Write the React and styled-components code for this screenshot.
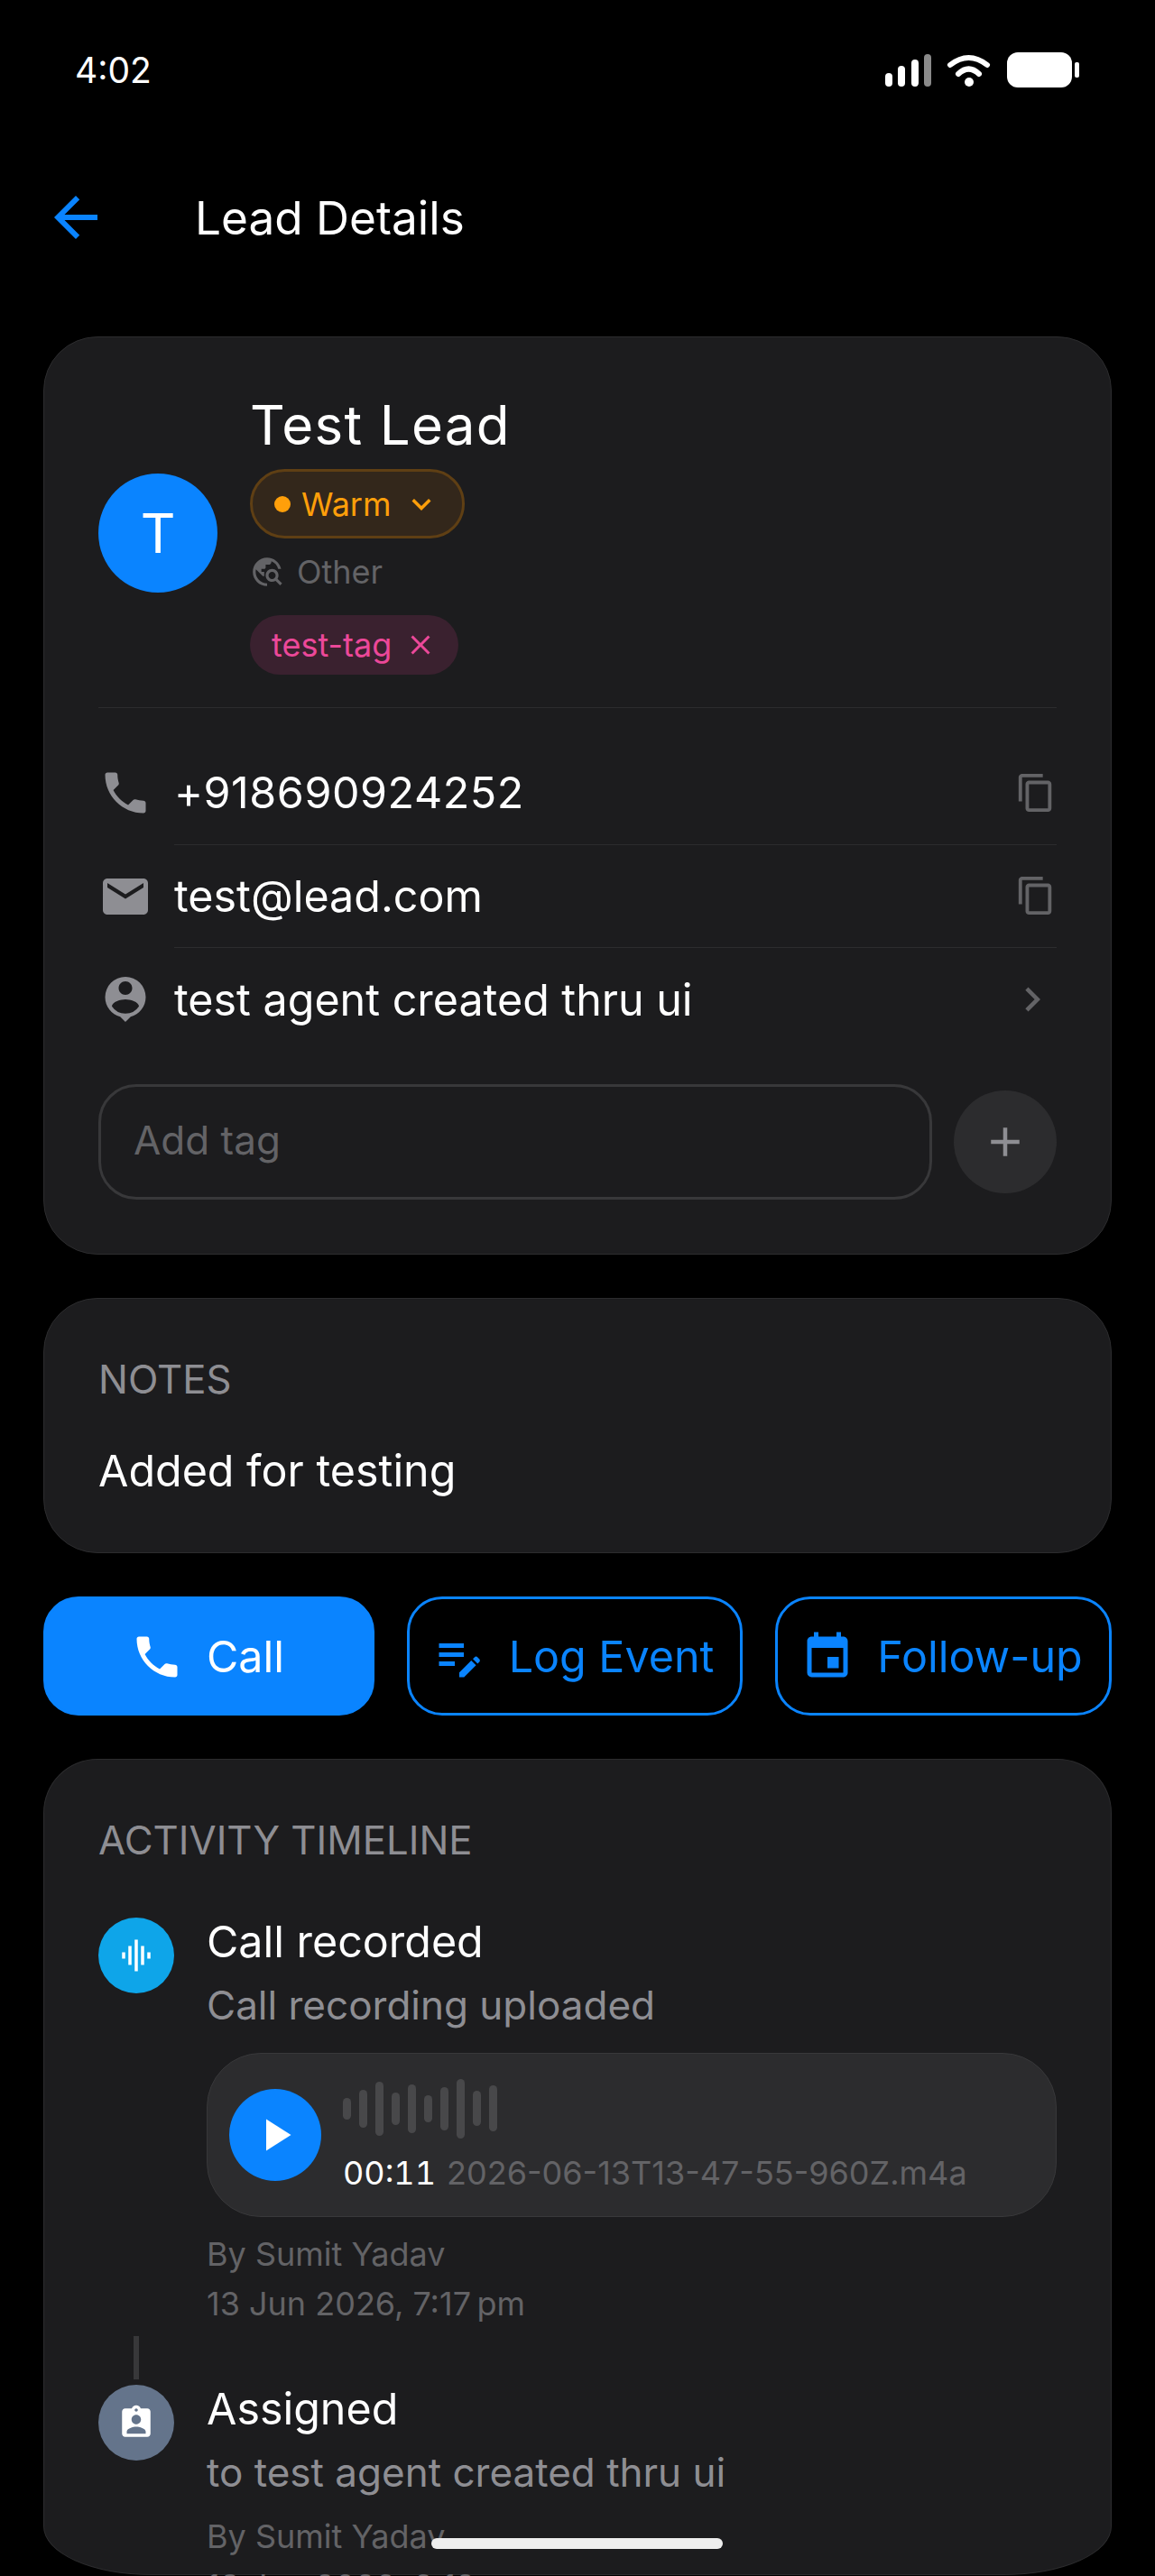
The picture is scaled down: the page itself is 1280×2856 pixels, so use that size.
import React from "react";
import styled, { createGlobalStyle } from "styled-components";
import {
  MdArrowBack, MdPhone, MdEmail, MdContentCopy, MdPersonPin, MdChevronRight, MdAdd,
  MdEditNote, MdEvent, MdGraphicEq, MdPlayArrow, MdAssignmentInd, MdTravelExplore,
  MdClose, MdKeyboardArrowDown,
} from "react-icons/md";

const Global = createGlobalStyle`
  html, body { margin: 0; padding: 0; background: #000; }
  body { font-family: Inter, "Liberation Sans", sans-serif; color: #fff; }
`;

const Screen = styled.div`
  position: relative;
  width: 1280px;
  height: 2856px;
  overflow: hidden;
  background: #000;
`;
const StatusBar = styled.div`
  height: 154px;
  display: flex;
  align-items: center;
  justify-content: space-between;
  padding: 0 84px 0 83px;
  box-sizing: border-box;
  font-size: 39px;
  font-weight: 400;
`;
const StatusGlyphs = styled.svg`
  margin: 6px -1px 0 0;
`;
const Header = styled.header`
  height: 174px;
  display: flex;
  align-items: center;
  padding-left: 48px;
  padding-bottom: 1px;
  box-sizing: border-box;
  color: #0a84ff;
  font-size: 72px;
`;
const BackIcon = styled.span`
  display: flex;
  width: 72px;
  height: 72px;
  margin-right: 96px;
`;
const PageTitle = styled.h1`
  margin: 0;
  font-size: 51.3px;
  font-weight: 400;
  color: #fff;
`;
const Content = styled.main`
  display: flex;
  flex-direction: column;
  gap: 48px;
  padding: 45px 48px 0;
`;
const Card = styled.section`
  background: #1c1c1e;
  border: 1px solid #2c2c2e;
  border-radius: 60px;
  padding: 60px;
`;
const Lead = styled.div`
  display: flex;
  align-items: center;
  gap: 36px;
  padding-bottom: 36px;
  border-bottom: 1px solid #2c2c2e;
`;
const Avatar = styled.div`
  width: 132px;
  height: 132px;
  border-radius: 50%;
  background: #0a84ff;
  display: flex;
  align-items: center;
  justify-content: center;
  font-size: 60px;
  font-weight: 400;
  flex: none;
`;
const LeadInfo = styled.div`
  display: flex;
  flex-direction: column;
  align-items: flex-start;
`;
const LeadName = styled.h2`
  margin: 0;
  font-size: 60px;
  line-height: 74px;
  font-weight: 400;
  letter-spacing: 1.3px;
`;
const StatusPill = styled.div`
  margin-top: 12px;
  height: 77px;
  box-sizing: border-box;
  border: 3px solid #5f3f14;
  background: #33271b;
  border-radius: 39px;
  display: flex;
  align-items: center;
  padding: 0 24px;
  color: #ff9f0a;
  font-size: 36px;
`;
const Dot = styled.span`
  width: 18px;
  height: 18px;
  border-radius: 50%;
  background: #ff9f0a;
  margin-right: 12px;
`;
const Source = styled.div`
  margin-top: 19px;
  height: 36px;
  line-height: 36px;
  display: flex;
  align-items: center;
  gap: 14px;
  color: #636366;
  font-size: 36px;
`;
const Tag = styled.div`
  margin-top: 30px;
  height: 66px;
  border-radius: 33px;
  background: #3a212f;
  color: #ec4899;
  font-size: 36px;
  display: flex;
  align-items: center;
  padding: 0 24px;
  gap: 14px;
`;
const Rows = styled.div`
  margin-top: 37px;
`;
const Row = styled.div`
  height: 114.5px;
  display: flex;
  align-items: center;
  gap: 24px;
  color: #8e8e93;
`;
const RowBody = styled.div`
  flex: 1;
  height: 100%;
  display: flex;
  align-items: center;
  justify-content: space-between;
  box-sizing: border-box;
  border-bottom: ${(p) => (p.$divider ? "1px solid #2c2c2e" : "none")};
`;
const RowText = styled.span`
  font-size: 48.4px;
  color: #fff;
  letter-spacing: ${(p) => p.$tracking || "0"};
`;
const Trailing = styled.span`
  display: flex;
  color: #636366;
`;
const AddTag = styled.div`
  margin-top: 36px;
  display: flex;
  align-items: center;
  gap: 24px;
`;
const TagInput = styled.div`
  flex: 1;
  height: 128px;
  box-sizing: border-box;
  border: 3px solid #38383a;
  border-radius: 42px;
  display: flex;
  align-items: center;
  padding-left: 36px;
  padding-bottom: 4px;
  color: #636366;
  font-size: 44px;
`;
const RoundAdd = styled.div`
  width: 114px;
  height: 114px;
  border-radius: 50%;
  background: #2c2c2e;
  color: #8e8e93;
  display: flex;
  align-items: center;
  justify-content: center;
`;
const SectionLabel = styled.div`
  font-size: 43.7px;
  line-height: 60px;
  color: #8e8e93;
`;
const NoteText = styled.p`
  margin: 41px 0 0;
  font-size: 48.4px;
  line-height: 60px;
  color: #fff;
`;
const Actions = styled.div`
  display: grid;
  grid-template-columns: 367fr 372fr 373fr;
  gap: 36px;
`;
const ActionButton = styled.button`
  height: 132px;
  box-sizing: border-box;
  border-radius: 39px;
  border: 3px solid #0a84ff;
  background: ${(p) => (p.$primary ? "#0a84ff" : "transparent")};
  color: ${(p) => (p.$primary ? "#fff" : "#0a84ff")};
  font: 400 48.4px Inter, sans-serif;
  display: flex;
  align-items: center;
  justify-content: center;
  gap: 25px;
  padding: 2px 4px 0 0;
`;
const TimelineCard = styled(Card)`
  box-sizing: border-box;
  height: 905px;
  padding-bottom: 0;
  border-radius: 60px 60px 120px 120px / 60px 60px 54px 54px;
`;
const Event = styled.div`
  display: flex;
  gap: 36px;
  margin-top: ${(p) => p.$top || "0"};
`;
const EventIcon = styled.div`
  width: 84px;
  height: 84px;
  border-radius: 50%;
  background: ${(p) => p.$color};
  display: flex;
  align-items: center;
  justify-content: center;
  flex: none;
`;
const EventBody = styled.div`
  flex: 1;
  min-width: 0;
`;
const EventTitle = styled.div`
  font-size: 48.4px;
  line-height: 60px;
  color: #fff;
  margin-top: -3px;
`;
const EventSub = styled.div`
  font-size: 44px;
  line-height: 60px;
  margin-top: 10px;
  color: #8e8e93;
`;
const Meta = styled.div`
  font-size: 36px;
  line-height: 55px;
  color: #636366;
`;
const MetaGroup = styled.div`
  margin-top: 14px;
`;
const Connector = styled.div`
  width: 6px;
  height: 48px;
  margin: 8px 0 6px 39px;
  background: #38383a;
`;
const Player = styled.div`
  margin-top: 23px;
  height: 182px;
  box-sizing: border-box;
  border: 1px solid #38383a;
  border-radius: 60px;
  background: #2c2c2e;
  display: flex;
  align-items: center;
  padding-left: 24px;
  gap: 24px;
`;
const PlayButton = styled.div`
  width: 102px;
  height: 102px;
  border-radius: 50%;
  background: #0a84ff;
  display: flex;
  align-items: center;
  justify-content: center;
  flex: none;
`;
const PlayerBody = styled.div`
  display: flex;
  flex-direction: column;
  gap: 16px;
  margin-top: 2px;
`;
const Wave = styled.div`
  display: flex;
  align-items: center;
  gap: 9px;
  height: 66px;
`;
const WaveBar = styled.span`
  width: 9px;
  border-radius: 5px;
  background: #48484a;
`;
const PlayerText = styled.div`
  font-size: 36px;
  line-height: 44px;
  color: #636366;
  white-space: nowrap;
`;
const Duration = styled.span`
  color: #fff;
  margin-right: 12px;
  font-variant-numeric: tabular-nums;
`;
const HomeIndicator = styled.div`
  position: absolute;
  left: 478px;
  top: 2814px;
  width: 323px;
  height: 12px;
  border-radius: 6px;
  background: #eee;
`;

const waveHeights = [24, 42, 60, 36, 54, 30, 48, 66, 39, 51];

function StatusIcons() {
  return (
    <StatusGlyphs width="216" height="44" viewBox="0 -2 216 44">
      <g fill="#fff">
        <rect x="0" y="21" width="8" height="15" rx="4" />
        <rect x="14" y="13" width="8" height="23" rx="4" />
        <rect x="29" y="6" width="8" height="30" rx="4" />
      </g>
      <rect x="43" y="0" width="8" height="36" rx="4" fill="#8a8a8a" />
      <g fill="none" stroke="#fff" strokeLinecap="round" strokeWidth="6">
        <path d="M72 12 Q92.5 -4 113 12" />
        <path d="M81 22 Q92.5 11 104 22" />
      </g>
      <circle cx="93" cy="31" r="5" fill="#fff" />
      <rect x="135" y="-2" width="72" height="39" rx="12" fill="#fff" />
      <rect x="210" y="9" width="5" height="17" rx="2" fill="#fff" />
    </StatusGlyphs>
  );
}

export default function App() {
  return (
    <Screen>
      <Global />
      <StatusBar>
        <span>4:02</span>
        <StatusIcons />
      </StatusBar>
      <Header>
        <BackIcon><MdArrowBack size={72} /></BackIcon>
        <PageTitle>Lead Details</PageTitle>
      </Header>
      <Content>
        <Card>
          <Lead>
            <Avatar>T</Avatar>
            <LeadInfo>
              <LeadName>Test Lead</LeadName>
              <StatusPill>
                <Dot />
                Warm
                <MdKeyboardArrowDown size={42} style={{ marginLeft: 12 }} />
              </StatusPill>
              <Source>
                <MdTravelExplore size={38} />
                Other
              </Source>
              <Tag>
                test-tag
                <MdClose size={36} />
              </Tag>
            </LeadInfo>
          </Lead>
          <Rows>
            <Row>
              <MdPhone size={60} />
              <RowBody $divider>
                <RowText $tracking="0.55px">+918690924252</RowText>
                <Trailing><MdContentCopy size={46} /></Trailing>
              </RowBody>
            </Row>
            <Row>
              <MdEmail size={60} />
              <RowBody $divider>
                <RowText>test@lead.com</RowText>
                <Trailing><MdContentCopy size={46} /></Trailing>
              </RowBody>
            </Row>
            <Row>
              <MdPersonPin size={60} />
              <RowBody>
                <RowText>test agent created thru ui</RowText>
                <Trailing><MdChevronRight size={54} /></Trailing>
              </RowBody>
            </Row>
          </Rows>
          <AddTag>
            <TagInput>Add tag</TagInput>
            <RoundAdd><MdAdd size={54} /></RoundAdd>
          </AddTag>
        </Card>
        <Card>
          <SectionLabel>NOTES</SectionLabel>
          <NoteText>Added for testing</NoteText>
        </Card>
        <Actions>
          <ActionButton $primary><MdPhone size={60} />Call</ActionButton>
          <ActionButton><MdEditNote size={60} />Log Event</ActionButton>
          <ActionButton><MdEvent size={60} />Follow-up</ActionButton>
        </Actions>
        <TimelineCard>
          <SectionLabel>ACTIVITY TIMELINE</SectionLabel>
          <Event $top="55px">
            <EventIcon $color="#0ea5e9"><MdGraphicEq size={42} color="#fff" /></EventIcon>
            <EventBody>
              <EventTitle>Call recorded</EventTitle>
              <EventSub>Call recording uploaded</EventSub>
              <Player>
                <PlayButton><MdPlayArrow size={60} color="#fff" /></PlayButton>
                <PlayerBody>
                  <Wave>
                    {waveHeights.map((h, i) => (
                      <WaveBar key={i} style={{ height: h }} />
                    ))}
                  </Wave>
                  <PlayerText>
                    <Duration>00:11</Duration>
                    2026-06-13T13-47-55-960Z.m4a
                  </PlayerText>
                </PlayerBody>
              </Player>
              <MetaGroup>
                <Meta>By Sumit Yadav</Meta>
                <Meta>13 Jun 2026, 7:17{"\u202f"}pm</Meta>
              </MetaGroup>
            </EventBody>
          </Event>
          <Connector />
          <Event>
            <EventIcon $color="#64748b"><MdAssignmentInd size={42} color="#fff" /></EventIcon>
            <EventBody>
              <EventTitle>Assigned</EventTitle>
              <EventSub>to test agent created thru ui</EventSub>
              <MetaGroup>
                <Meta>By Sumit Yadav</Meta>
                <Meta>13 Jun 2026, 6:12{"\u202f"}pm</Meta>
              </MetaGroup>
            </EventBody>
          </Event>
        </TimelineCard>
      </Content>
      <HomeIndicator />
    </Screen>
  );
}
